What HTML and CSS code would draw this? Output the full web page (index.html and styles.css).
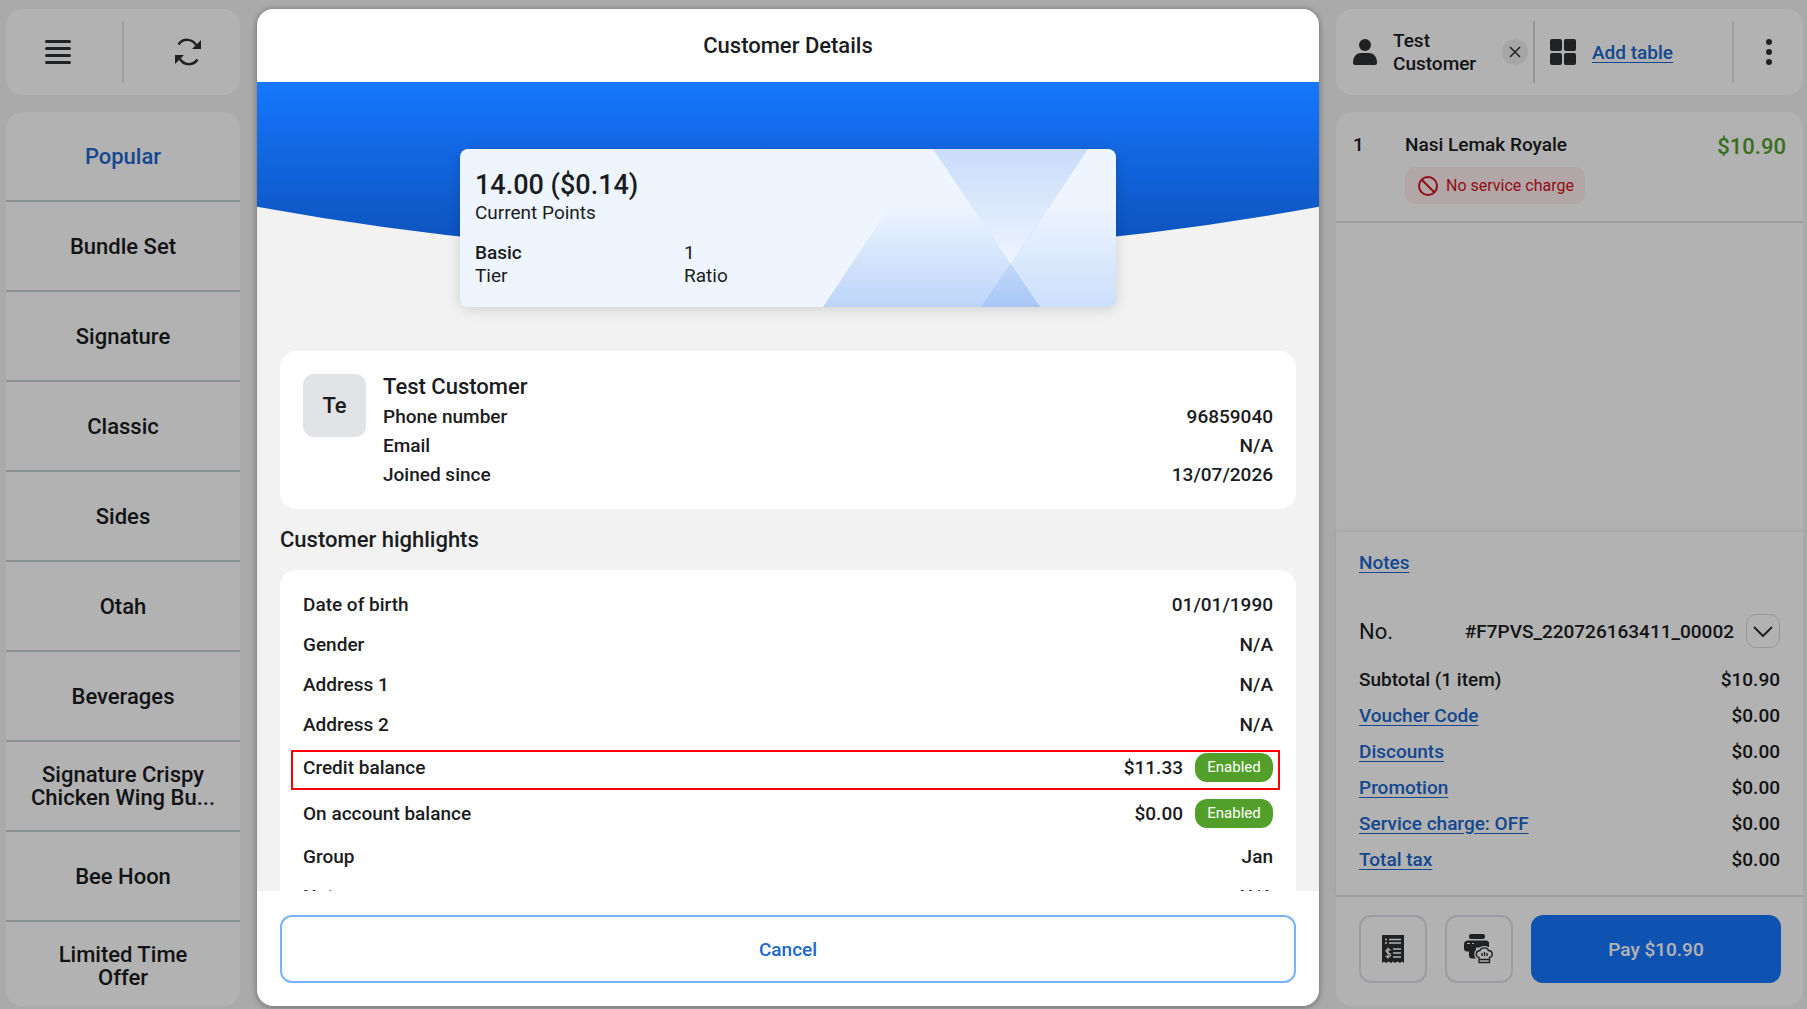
FILE: index.html
```html
<!DOCTYPE html>
<html lang="en">
<head>
<meta charset="UTF-8">
<meta name="viewport" content="width=device-width, initial-scale=1.0">
<title>Customer Details</title>
<link rel="stylesheet" href="styles.css">
</head>
<body>

<div class="pos">

  <!-- Left column -->
  <aside class="sidebar">
    <div class="toolbar panel">
      <button class="tool-btn" aria-label="Menu">
        <svg width="26" height="26" viewBox="0 0 26 26" fill="none" stroke="#2d3033" stroke-width="3" stroke-linecap="round"><path d="M1.500 2.500h23M1.500 9.500h23M1.500 16.500h23M1.500 23.500h23"/></svg>
      </button>
      <button class="tool-btn" aria-label="Refresh">
        <svg width="28" height="28" viewBox="0 0 28 28" fill="none" stroke="#2d3033" stroke-width="2.500"><path d="M4.500 6.500C9 0 18 .5 22 7M23.500 21.500C19 28 10 27.500 6 21"/><path d="M27 2v9H18zM1 26v-9H10z" fill="#2d3033" stroke="none"/></svg>
      </button>
    </div>
    <nav class="categories panel">
      <div class="category-list">
        <a href="#" class="category active">Popular</a>
        <a href="#" class="category">Bundle Set</a>
        <a href="#" class="category">Signature</a>
        <a href="#" class="category">Classic</a>
        <a href="#" class="category">Sides</a>
        <a href="#" class="category">Otah</a>
        <a href="#" class="category">Beverages</a>
        <a href="#" class="category">Signature Crispy<br>Chicken Wing Bu...</a>
        <a href="#" class="category">Bee Hoon</a>
        <a href="#" class="category">Limited Time<br>Offer</a>
      </div>
    </nav>
  </aside>

  <!-- Customer modal -->
  <section class="modal" role="dialog" aria-labelledby="modal-title">
    <h1 class="modal-header" id="modal-title">Customer Details</h1>

    <div class="modal-body">
      <div class="hero">
        <svg class="hero-curve" viewBox="0 0 1062 172" preserveAspectRatio="none">
          <defs>
            <linearGradient id="heroFill" x1="0" y1="0" x2="0" y2="1">
              <stop offset="0" stop-color="#1677ff"/>
              <stop offset="1" stop-color="#0c50b8"/>
            </linearGradient>
          </defs>
          <path d="M0 0H1062V124Q531 220 0 124Z" fill="url(#heroFill)"/>
        </svg>
        <div class="points-card">
          <svg class="points-art" viewBox="0 0 656 158" preserveAspectRatio="none">
            <defs>
              <linearGradient id="fadeDown" x1="0" y1="0" x2="0" y2="1">
                <stop offset="0" stop-color="#c9dcfa"/>
                <stop offset="1" stop-color="#eef5ff"/>
              </linearGradient>
              <linearGradient id="fadeUp" x1="0" y1="0" x2="0" y2="158" gradientUnits="userSpaceOnUse">
                <stop offset=".35" stop-color="#6ca0f0" stop-opacity="0"/>
                <stop offset="1" stop-color="#6ca0f0" stop-opacity=".38"/>
              </linearGradient>
            </defs>
            <path d="M473 0H628L551 116Z" fill="url(#fadeDown)"/>
            <path d="M363 158L468 0H473L580 158Z" fill="url(#fadeUp)"/>
            <path d="M521 158L628 0H656V158Z" fill="url(#fadeUp)" opacity=".7"/>
          </svg>
          <div class="points-value">14.00 ($0.14)</div>
          <div class="points-label">Current Points</div>
          <dl class="points-meta">
            <div><dd class="strong">Basic</dd><dt>Tier</dt></div>
            <div><dd>1</dd><dt>Ratio</dt></div>
          </dl>
        </div>
      </div>

      <div class="card profile">
        <div class="avatar">Te</div>
        <div class="profile-info">
          <h2>Test Customer</h2>
          <dl>
            <div class="line"><dt>Phone number</dt><dd>96859040</dd></div>
            <div class="line"><dt>Email</dt><dd>N/A</dd></div>
            <div class="line"><dt>Joined since</dt><dd>13/07/2026</dd></div>
          </dl>
        </div>
      </div>

      <h2 class="section-title">Customer highlights</h2>

      <dl class="card highlights">
        <div class="row"><dt>Date of birth</dt><dd>01/01/1990</dd></div>
        <div class="row"><dt>Gender</dt><dd>N/A</dd></div>
        <div class="row"><dt>Address 1</dt><dd>N/A</dd></div>
        <div class="row"><dt>Address 2</dt><dd>N/A</dd></div>
        <div class="row tall marked"><dt>Credit balance</dt><dd>$11.33 <span class="badge">Enabled</span></dd></div>
        <div class="row tall"><dt>On account balance</dt><dd>$0.00 <span class="badge">Enabled</span></dd></div>
        <div class="row"><dt>Group</dt><dd>Jan</dd></div>
        <div class="row"><dt>Notes</dt><dd>N/A</dd></div>
      </dl>
    </div>

    <div class="modal-footer">
      <button class="cancel-btn">Cancel</button>
    </div>
  </section>

  <!-- Right column -->
  <aside class="order">
    <div class="order-header panel">
      <div class="customer">
        <svg width="24" height="26" viewBox="0 0 24 26" fill="#2d3033"><circle cx="12" cy="6" r="6"/><path d="M0 24C0 17 4 14 8 14h8c4 0 8 3 8 10 0 1-1 2-2 2H2c-1 0-2-1-2-2z"/></svg>
        <span class="customer-name">Test Customer</span>
        <button class="clear-btn" aria-label="Remove customer">
          <svg width="12" height="12" viewBox="0 0 12 12" stroke="#2d3033" stroke-width="1.500"><path d="M1 1l10 10M11 1L1 11"/></svg>
        </button>
      </div>
      <div class="table-pick">
        <svg width="26" height="26" viewBox="0 0 26 26" fill="#2d3033"><rect width="12" height="12" rx="2"/><rect x="14" width="12" height="12" rx="2"/><rect y="14" width="12" height="12" rx="2"/><rect x="14" y="14" width="12" height="12" rx="2"/></svg>
        <a href="#">Add table</a>
      </div>
      <button class="more-btn" aria-label="More">
        <svg width="6" height="26" viewBox="0 0 6 26" fill="#2d3033"><circle cx="3" cy="3" r="3"/><circle cx="3" cy="13" r="3"/><circle cx="3" cy="23" r="3"/></svg>
      </button>
    </div>

    <div class="order-main panel">
      <div class="item">
        <span class="qty">1</span>
        <div class="item-info">
          <div>Nasi Lemak Royale</div>
          <span class="chip">
            <svg width="20" height="20" viewBox="0 0 20 20" fill="none" stroke="#cf1322" stroke-width="2"><circle cx="10" cy="10" r="9"/><path d="M4 4l12 12"/></svg>
            No service charge
          </span>
        </div>
        <span class="price">$10.90</span>
      </div>

      <div class="summary">
        <a href="#" class="notes">Notes</a>
        <div class="order-no">
          <span class="no-label">No.</span>
          <span>#F7PVS_220726163411_00002</span>
          <button class="expand-btn" aria-label="Show order details">
            <svg width="20" height="12" viewBox="0 0 20 12" fill="none" stroke="#2d3033" stroke-width="2"><path d="M1 1l9 9 9-9"/></svg>
          </button>
        </div>
        <dl class="totals">
          <div><dt>Subtotal (1 item)</dt><dd>$10.90</dd></div>
          <div><dt><a href="#">Voucher Code</a></dt><dd>$0.00</dd></div>
          <div><dt><a href="#">Discounts</a></dt><dd>$0.00</dd></div>
          <div><dt><a href="#">Promotion</a></dt><dd>$0.00</dd></div>
          <div><dt><a href="#">Service charge: OFF</a></dt><dd>$0.00</dd></div>
          <div><dt><a href="#">Total tax</a></dt><dd>$0.00</dd></div>
        </dl>
      </div>

      <div class="actions">
        <button class="icon-btn" aria-label="Print receipt">
          <svg width="22" height="28" viewBox="0 0 22 28"><path d="M0 0h22v28l-2-1.500-2 1.500-2.500-1.500L13 28l-2-1.500L9 28l-2.500-1.500L4 28l-2-1.500L0 28z" fill="#2d3033"/><path d="M3 4.500h2M7 4.500h12M3 8h2M7 8h12M11 14h8M11 18h8M11 22h8" stroke="#fff" stroke-width="1.500"/><path d="M8.500 15.500C7.500 14 4 14 4 16s4.500 1.500 4.500 4S4.500 22.500 3.500 21M6 12.500v11" stroke="#fff" stroke-width="1.300" fill="none"/></svg>
        </button>
        <button class="icon-btn" aria-label="Print to kitchen">
          <svg width="30" height="30" viewBox="0 0 30 30"><rect x="5" width="16" height="5" rx="2" fill="#2d3033"/><path d="M4 6.500h18c2 0 3 1 3 3v4H12v11H8c-2 0-3-1-3-3v-4H3c-2 0-3-1-3-3V10c0-2 2-3.500 4-3.500z" fill="#2d3033"/><path d="M3 9.500h3M8 9.500h2" stroke="#fff"/><path d="M15 28.500v-5c-4-1-3.500-7 1-7 1-3.500 7.500-3.500 8.500 0 4.500 0 5 6 1 7v5z" fill="#fff" stroke="#fff" stroke-width="4"/><path d="M15 28.500v-5c-4-1-3.500-7 1-7 1-3.500 7.500-3.500 8.500 0 4.500 0 5 6 1 7v5zM15 25.500h10.500M18 22v-3M20.500 22v-4M23 22v-3" fill="#fff" stroke="#2d3033" stroke-width="1.400"/></svg>
        </button>
        <button class="pay-btn">Pay $10.90</button>
      </div>
    </div>
  </aside>

  <div class="backdrop"></div>
</div>

</body>
</html>
```
FILE: styles.css
```css
/* General Styles */
* {
  box-sizing: border-box;
}

body {
  margin: 0;
  font-family: Roboto, "Liberation Sans", sans-serif;
  font-size: 19px;
  font-weight: 500;
  color: #1a1c1e;
  background-color: #f4f4f4;
}

h1, h2, dl, dd {
  margin: 0;
}

button {
  font: inherit;
  color: inherit;
  padding: 0;
  border: none;
  background: none;
  cursor: pointer;
}

a {
  color: #2067ce;
  text-underline-offset: 3px;
}

.pos {
  position: relative;
  display: grid;
  grid-template-columns: 234px 1fr 467px;
  gap: 17px;
  height: 100vh;
  padding: 9px 4px 3px 6px;
}

.panel {
  background-color: #fff;
  border-radius: 16px;
}

.backdrop {
  position: absolute;
  inset: 0;
  background-color: rgba(0, 0, 0, 0.3);
}

/* Left column */
.sidebar,
.order {
  display: flex;
  flex-direction: column;
  gap: 17px;
  min-height: 0;
}

.toolbar {
  display: flex;
  height: 86px;
  padding: 12px 0;
}

.tool-btn {
  display: flex;
  flex: 1;
  align-items: center;
  justify-content: center;
  padding-right: 12px;
}

.tool-btn + .tool-btn {
  padding: 0 0 0 12px;
  border-left: 2px solid #e3e5e8;
}

.categories {
  display: flex;
  flex: 1;
  flex-direction: column;
  overflow: hidden;
}

.category-list {
  display: flex;
  flex: 1;
  flex-direction: column;
  margin-bottom: -4px;
}

.category {
  display: flex;
  flex: 1;
  align-items: center;
  justify-content: center;
  font-size: 22px;
  line-height: 23px;
  text-align: center;
  text-decoration: none;
  color: #1a1c1e;
}

.category + .category {
  border-top: 2px solid #c8ced3;
}

.category.active {
  color: #2067ce;
}

/* Modal */
.modal {
  z-index: 1;
  display: flex;
  flex-direction: column;
  min-height: 0;
  overflow: hidden;
  background-color: #fff;
  border-radius: 16px;
  box-shadow: 0 1px 6px rgba(0, 0, 0, 0.4);
}

.modal-header {
  font-size: 22px;
  font-weight: 500;
  line-height: 73px;
  text-align: center;
}

.modal-body {
  flex: 1;
  min-height: 0;
  overflow: hidden;
  padding: 0 23px;
  background-color: #f2f2f2;
}

.hero {
  position: relative;
  margin: 0 -23px 44px;
  padding-top: 67px;
}

.hero-curve {
  position: absolute;
  top: 0;
  left: 0;
  width: 100%;
  height: 173px;
}

.points-card {
  position: relative;
  width: 656px;
  height: 158px;
  margin: 0 auto;
  padding: 20px 15px;
  overflow: hidden;
  font-weight: 400;
  line-height: 23px;
  background-color: #eef5ff;
  border-radius: 8px;
  box-shadow: 0 2px 14px rgba(0, 0, 0, 0.15);
}

.points-art {
  position: absolute;
  inset: 0;
  width: 100%;
  height: 100%;
}

.points-value {
  font-size: 27px;
  font-weight: 500;
  line-height: 32px;
}

.points-meta {
  display: grid;
  grid-template-columns: 209px 1fr;
  margin-top: 17px;
}

.points-meta > div {
  display: flex;
  flex-direction: column;
}

.strong {
  font-weight: 500;
}

.card {
  padding: 23px;
  background-color: #fff;
  border-radius: 16px;
}

.profile {
  display: flex;
  gap: 17px;
  height: 158px;
}

.avatar {
  width: 63px;
  height: 63px;
  font-size: 22px;
  line-height: 63px;
  text-align: center;
  background-color: #e1e3e6;
  border-radius: 11px;
}

.profile-info {
  flex: 1;
}

.profile-info h2 {
  margin-bottom: 2px;
  font-size: 22px;
  font-weight: 500;
  line-height: 26px;
}

.line,
.row,
.totals > div {
  display: flex;
  align-items: center;
  justify-content: space-between;
}

.line {
  height: 29px;
}

.section-title {
  font-size: 22px;
  font-weight: 500;
  line-height: 61px;
}

.highlights {
  padding: 14px 23px;
}

.row {
  position: relative;
  height: 40px;
}

.row.tall {
  height: 46px;
}

.row dd {
  display: flex;
  align-items: center;
  gap: 12px;
}

.marked::after {
  content: "";
  position: absolute;
  inset: 6px -7px 0 -12px;
  border: 2px solid #f00;
}

.badge {
  width: 78px;
  font-size: 15px;
  font-weight: 400;
  line-height: 29px;
  text-align: center;
  color: #fff;
  background-color: #52a02b;
  border-radius: 12px;
}

.modal-footer {
  padding: 24px 23px 23px;
}

.cancel-btn {
  display: block;
  width: 100%;
  height: 68px;
  color: #2067ce;
  border: 2px solid #7ab3ff;
  border-radius: 12px;
}

/* Order column */
.order-header {
  display: flex;
  height: 86px;
  padding: 12px 0;
}

.customer {
  display: flex;
  flex: 1;
  align-items: center;
  padding: 0 5px 0 17px;
}

.customer-name {
  flex: 1;
  margin: 0 16px;
  line-height: 23px;
}

.clear-btn,
.more-btn {
  display: flex;
  align-items: center;
  justify-content: center;
}

.clear-btn {
  width: 26px;
  height: 26px;
  background-color: #eee;
  border-radius: 50%;
}

.table-pick {
  display: flex;
  align-items: center;
  gap: 16px;
  width: 199px;
  padding-left: 15px;
  border-left: 2px solid #d5dadd;
}

.more-btn {
  width: 71px;
  border-left: 2px solid #e3e5e8;
}

.order-main {
  display: flex;
  flex: 1;
  flex-direction: column;
  min-height: 0;
}

.item {
  display: flex;
  height: 111px;
  padding: 20px 17px 0;
  line-height: 26px;
  border-bottom: 2px solid #e0e2e5;
}

.qty {
  width: 52px;
}

.item-info {
  flex: 1;
}

.chip {
  display: inline-flex;
  align-items: center;
  gap: 8px;
  height: 37px;
  margin-top: 9px;
  padding: 0 11px 0 13px;
  font-size: 16px;
  font-weight: 400;
  color: #cf1322;
  background-color: #ffeef0;
  border-radius: 10px;
}

.price {
  font-size: 22px;
  line-height: 29px;
  color: #52a02b;
}

.summary {
  margin-top: auto;
  padding: 17px 23px 18px;
  box-shadow: 0 -2px 4px rgba(0, 0, 0, 0.07);
}

.notes {
  display: block;
  line-height: 28px;
}

.order-no {
  display: flex;
  align-items: center;
  gap: 12px;
  height: 34px;
  margin: 37px 0 13px;
}

.no-label {
  flex: 1;
  font-size: 22px;
  font-weight: 400;
}

.expand-btn {
  width: 34px;
  height: 34px;
  border: 1px solid #d5dadd;
  border-radius: 10px;
}

.totals > div {
  height: 36px;
}

.actions {
  display: flex;
  gap: 18px;
  padding: 18px 22px 23px 23px;
  border-top: 2px solid #e0e2e5;
}

.icon-btn {
  display: flex;
  align-items: center;
  justify-content: center;
  width: 68px;
  height: 68px;
  border: 2px solid #dee1e5;
  border-radius: 12px;
}

.pay-btn {
  flex: 1;
  color: #fff;
  background-color: #1677ff;
  border-radius: 12px;
}
```
